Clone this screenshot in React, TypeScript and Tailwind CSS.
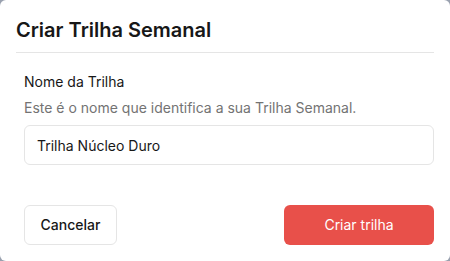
import React from "react";

export default function App() {
  return (
    <div className="h-[261px] w-[450px] bg-gray-400 font-['Inter',sans-serif]">
      <div className="flex h-full flex-col rounded-md bg-white">
        <div className="px-4 pt-4 pb-2">
          <h2 className="text-xl leading-7 font-semibold text-neutral-900">Criar Trilha Semanal</h2>
        </div>
        <div className="mx-4 h-px bg-neutral-200" />

        <div className="flex flex-col pt-[19px] pr-4 pl-6">
          <label className="text-sm leading-5 font-normal text-neutral-900">Nome da Trilha</label>
          <p className="mt-[6px] text-sm leading-5 text-neutral-500">
            Este é o nome que identifica a sua Trilha Semanal.
          </p>
          <input
            className="mt-[7px] h-10 w-full rounded-md border border-neutral-200 px-3 text-sm text-neutral-900 outline-none"
            defaultValue="Trilha Núcleo Duro"
          />
        </div>

        <div className="mt-auto flex items-center justify-between pr-4 pb-4 pl-6">
          <button className="h-10 w-[93px] rounded-md border border-neutral-200 bg-white text-sm font-medium text-neutral-900">
            Cancelar
          </button>
          <button className="h-10 w-[150px] rounded-md bg-[#e8504a] text-sm font-normal text-white">
            Criar trilha
          </button>
        </div>
      </div>
    </div>
  );
}
